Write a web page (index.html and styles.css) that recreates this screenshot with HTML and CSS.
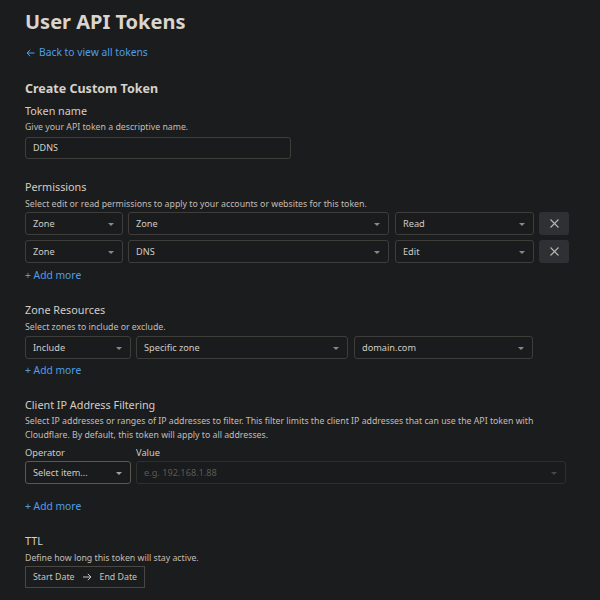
FILE: index.html
```html
<!DOCTYPE html>
<html>
<head>
<meta charset="utf-8">
<link rel="stylesheet" href="styles.css">
</head>
<body>
<div class="page">
  <h1 class="title">User API Tokens</h1>
  <a class="back" href="#"><svg class="back-arrow" width="9" height="8" viewBox="0 0 9 8"><path d="M8.5 4H1M4.2 0.8L1 4L4.2 7.2" fill="none" stroke="#4d9fe6" stroke-width="1"/></svg>Back to view all tokens</a>
  <h2 class="subtitle">Create Custom Token</h2>

  <div class="field-title first">Token name</div>
  <div class="desc d3">Give your API token a descriptive name.</div>
  <div class="input name-input">DDNS</div>

  <div class="field-title sec">Permissions</div>
  <div class="desc">Select edit or read permissions to apply to your accounts or websites for this token.</div>
  <div class="rows">
    <div class="row">
      <div class="select w98">Zone<span class="caret"></span></div>
      <div class="select w261">Zone<span class="caret"></span></div>
      <div class="select w139 gap6">Read<span class="caret"></span></div>
      <div class="xbtn"><svg width="11" height="11" viewBox="0 0 11 11"><path d="M1.5 1.5L9.5 9.5M9.5 1.5L1.5 9.5" stroke="#b9b5b0" stroke-width="1.1"/></svg></div>
    </div>
    <div class="row">
      <div class="select w98">Zone<span class="caret"></span></div>
      <div class="select w261">DNS<span class="caret"></span></div>
      <div class="select w139 gap6">Edit<span class="caret"></span></div>
      <div class="xbtn"><svg width="11" height="11" viewBox="0 0 11 11"><path d="M1.5 1.5L9.5 9.5M9.5 1.5L1.5 9.5" stroke="#b9b5b0" stroke-width="1.1"/></svg></div>
    </div>
  </div>
  <a class="add" href="#">+ Add more</a>

  <div class="field-title sec">Zone Resources</div>
  <div class="desc">Select zones to include or exclude.</div>
  <div class="rows z">
    <div class="row">
      <div class="select w106">Include<span class="caret"></span></div>
      <div class="select w212">Specific zone<span class="caret"></span></div>
      <div class="select w179 gap6">domain.com<span class="caret"></span></div>
    </div>
  </div>
  <a class="add z" href="#">+ Add more</a>

  <div class="field-title sec">Client IP Address Filtering</div>
  <div class="desc two">Select IP addresses or ranges of IP addresses to filter. This filter limits the client IP addresses that can use the API token with Cloudflare. By default, this token will apply to all addresses.</div>
  <div class="labels">
    <span class="lbl w106">Operator</span>
    <span class="lbl">Value</span>
  </div>
  <div class="row ip">
    <div class="select w106 active">Select item...<span class="caret light"></span></div>
    <div class="select w430 disabled">e.g. 192.168.1.88<span class="caret dim"></span></div>
  </div>
  <a class="add ipadd" href="#">+ Add more</a>

  <div class="field-title sec">TTL</div>
  <div class="desc">Define how long this token will stay active.</div>
  <div class="dates">
    <span>Start Date</span>
    <svg class="date-arrow" width="9" height="8" viewBox="0 0 9 8"><path d="M0 4H8M4.8 0.8L8 4L4.8 7.2" fill="none" stroke="#c8c3bc" stroke-width="1"/></svg>
    <span>End Date</span>
  </div>
</div>
</body>
</html>
```

FILE: styles.css
```css
* { box-sizing: border-box; }
html, body {
  margin: 0;
  padding: 0;
  background: #1b1c1e;
}
body {
  font-family: "Noto Sans", "Open Sans", sans-serif;
  color: #d6d1ca;
}
.page {
  padding: 8px 0 0 25px;
  width: 600px;
  height: 600px;
  overflow: hidden;
}
.title {
  margin: 0;
  font-size: 20px;
  line-height: 28px;
  font-weight: 700;
  color: #d9d4cd;
}
.back {
  display: flex;
  align-items: center;
  margin-top: 8px;
  font-size: 10.3px;
  line-height: 16px;
  color: #4d9fe6;
  text-decoration: none;
}
.back-arrow {
  margin: 2px 4px 0 1px;
}
.subtitle {
  margin: 20px 0 0;
  font-size: 12.5px;
  line-height: 18px;
  font-weight: 700;
  color: #d6d1ca;
}
.field-title {
  font-size: 10.8px;
  line-height: 14px;
  color: #d3cec7;
}
.field-title.first { margin-top: 6px; }
.field-title.sec { margin-top: 21px; }
.desc {
  margin-top: 4px;
  font-size: 8.75px;
  line-height: 13px;
  color: #c2bdb6;
}
.desc.d3 { margin-top: 3px; }
.desc.two {
  margin-top: 2px;
  line-height: 14px;
  width: 540px;
}
.input {
  margin-top: 3px;
  width: 266px;
  height: 22px;
  border: 1px solid #3f3d3a;
  border-radius: 3px;
  background: #1a1b1d;
  font-size: 9px;
  line-height: 20px;
  padding-left: 7px;
  color: #d6d1ca;
}
.rows {
  margin-top: 1px;
  display: flex;
  flex-direction: column;
  gap: 5px;
}
.rows.z { margin-top: 2px; }
.row {
  display: flex;
  gap: 5px;
}
.select {
  position: relative;
  height: 23px;
  border: 1px solid #3f3d3a;
  border-radius: 3px;
  background: #1a1b1d;
  font-size: 9.2px;
  line-height: 21px;
  padding-left: 7px;
  color: #d0cbc4;
}
.gap6 { margin-left: 1px; }
.w98 { width: 98px; }
.w261 { width: 261px; }
.w139 { width: 139px; }
.w106 { width: 106px; }
.w212 { width: 212px; }
.w179 { width: 179px; }
.w430 { width: 430px; }
.caret {
  position: absolute;
  right: 8px;
  top: 10px;
  width: 0;
  height: 0;
  border-left: 3px solid transparent;
  border-right: 3px solid transparent;
  border-top: 3px solid #8d8882;
}
.caret.light { border-top-color: #a7a29b; }
.caret.dim { border-top-color: #4a4845; }
.select.active { border-color: #5b5852; }
.select.disabled {
  border-color: #2f2f2f;
  color: #5c5955;
}
.xbtn {
  width: 30px;
  height: 23px;
  border-radius: 3px;
  background: #2e3033;
  display: flex;
  align-items: center;
  justify-content: center;
}
.add {
  display: block;
  margin-top: 5px;
  font-size: 10.3px;
  line-height: 14px;
  color: #4d9fe6;
  text-decoration: none;
}
.add.z { margin-top: 4px; }
.add.ipadd { margin-top: 15px; }
.labels {
  margin-top: 4px;
  display: flex;
  gap: 5px;
  font-size: 9.3px;
  line-height: 14px;
  color: #d0cbc4;
}
.lbl { display: block; }
.row.ip { margin-top: 1px; }
.dates {
  margin-top: 1px;
  width: 120px;
  height: 22px;
  border: 1px solid #4a4743;
  display: flex;
  align-items: center;
  gap: 8px;
  padding-left: 7px;
  font-size: 8.8px;
  color: #c8c3bc;
}
.date-arrow { flex: none; }
```
